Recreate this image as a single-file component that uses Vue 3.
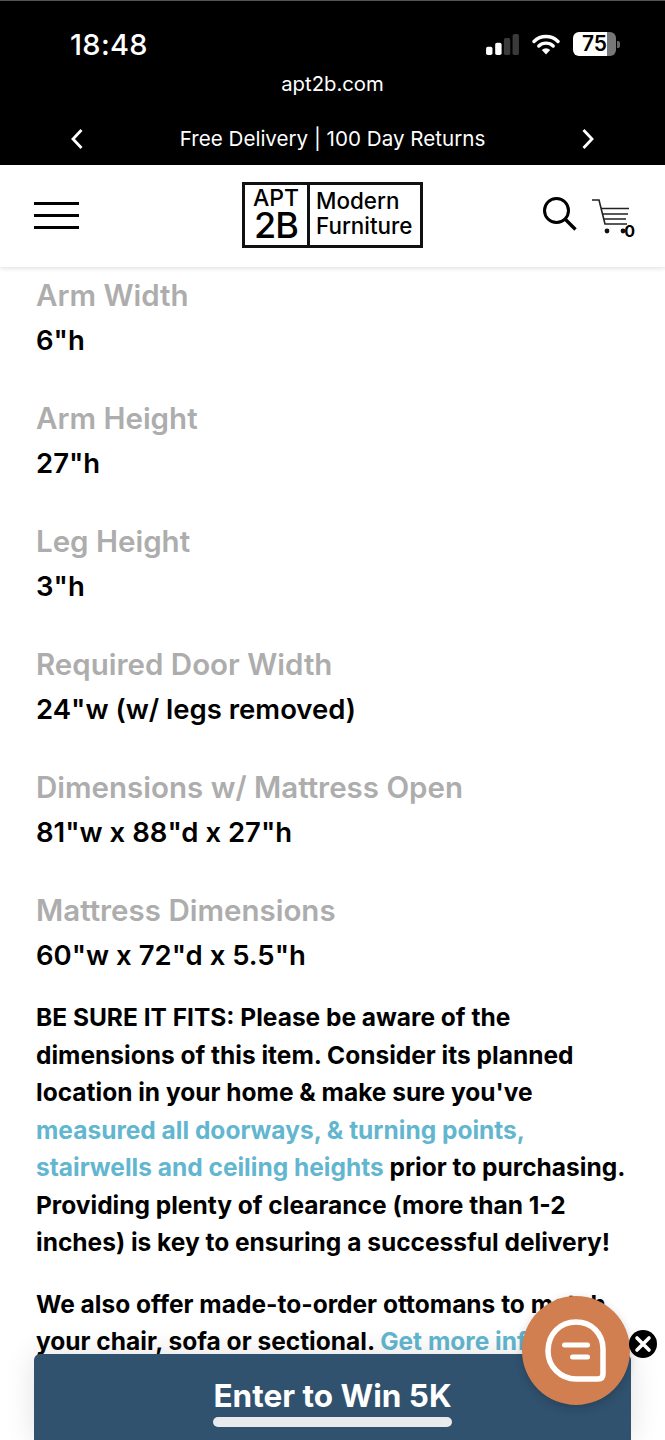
<template>
  <div class="page">
    <div class="top_black">
      <div class="status_bar">
        <span class="time">18:48</span>
        <div class="status_icons">
          <svg class="signal" width="33" height="21" viewBox="0 0 36 23">
            <rect x="0" y="14" width="7" height="9" rx="2" fill="#fff" />
            <rect x="10" y="9.5" width="7" height="13.5" rx="2" fill="#fff" />
            <rect x="19.5" y="4.5" width="7" height="18.5" rx="2" fill="#3a3a3a" />
            <rect x="29" y="0" width="7" height="23" rx="2" fill="#3a3a3a" />
          </svg>
          <svg class="wifi" width="28" height="21" viewBox="0 0 28 21">
            <path d="M2 7.5 A17 17 0 0 1 26 7.5" fill="none" stroke="#fff" stroke-width="3.4" stroke-linecap="round" />
            <path d="M6.8 12 A10.5 10.5 0 0 1 21.2 12" fill="none" stroke="#fff" stroke-width="3.4" stroke-linecap="round" />
            <path d="M14 20.5 L9.8 16 A6 6 0 0 1 18.2 16 Z" fill="#fff" />
          </svg>
          <div class="battery">
            <div class="battery_body"><span>75</span></div>
            <div class="battery_tip"></div>
          </div>
        </div>
      </div>
      <div class="url">apt2b.com</div>
      <div class="promo">
        <svg width="14" height="22" viewBox="0 0 14 22"><path d="M11.5 2 L3 11 L11.5 20" fill="none" stroke="#fff" stroke-width="2.8" /></svg>
        <span>Free Delivery | 100 Day Returns</span>
        <svg width="14" height="22" viewBox="0 0 14 22"><path d="M2.5 2 L11 11 L2.5 20" fill="none" stroke="#fff" stroke-width="2.8" /></svg>
      </div>
    </div>

    <div class="nav">
      <div class="burger"><i></i><i></i><i></i></div>
      <div class="logo">
        <div class="logo_left">
          <span class="apt">APT</span>
          <span class="two_b">2B</span>
        </div>
        <div class="logo_right">
          <span>Modern</span>
          <span>Furniture</span>
        </div>
      </div>
      <div class="nav_icons">
        <svg width="36" height="36" viewBox="0 0 36 36">
          <circle cx="14.5" cy="14.5" r="12" fill="none" stroke="#000" stroke-width="3" />
          <path d="M23 23 L33.5 33.5" stroke="#000" stroke-width="3.4" />
        </svg>
        <div class="cart">
          <svg width="38" height="36" viewBox="0 0 38 36">
            <path d="M0 1 H7 L13 25 H35" fill="none" stroke="#222" stroke-width="1.6" />
            <path d="M9 9.5 H37 M10.5 15 H36 M12 20 H34" fill="none" stroke="#222" stroke-width="1.6" />
            <circle cx="15" cy="32" r="2.4" fill="#111" />
            <circle cx="31" cy="32" r="2.4" fill="#111" />
          </svg>
          <span class="cart_count">0</span>
        </div>
      </div>
    </div>

    <div class="content">
      <div v-for="spec in specs" :key="spec.label" class="spec">
        <div class="spec_label">{{ spec.label }}</div>
        <div class="spec_value">{{ spec.value }}</div>
      </div>

      <p class="note first_note">
        BE SURE IT FITS: Please be aware of the<br />
        dimensions of this item. Consider its planned<br />
        location in your home &amp; make sure you've<br />
        <span class="link">measured all doorways, &amp; turning points,<br />
        stairwells and ceiling heights</span> prior to purchasing.<br />
        Providing plenty of clearance (more than 1-2<br />
        inches) is key to ensuring a successful delivery!
      </p>
      <p class="note">
        We also offer made-to-order ottomans to match<br />
        your chair, sofa or sectional. <span class="link">Get more info</span>
      </p>
    </div>

    <div class="win_banner">
      <div class="win_label">
        <span>Enter to Win 5K</span>
        <div class="win_underline"></div>
      </div>
    </div>

    <div class="chat_bubble">
      <svg width="66" height="66" viewBox="0 0 66 66">
        <path d="M33 4 C48.5 4 60 15.5 60 31 V56 Q60 61 55 61 H33 C17.5 61 5 48.5 5 33 C5 16 17 4 33 4 Z" fill="none" stroke="#fff" stroke-width="5.5" />
        <path d="M21.5 27 H44.5" stroke="#fff" stroke-width="5" stroke-linecap="round" />
        <path d="M29.5 39 H44.5" stroke="#fff" stroke-width="5" stroke-linecap="round" />
      </svg>
    </div>
    <div class="chat_close">
      <svg width="18" height="18" viewBox="0 0 18 18">
        <path d="M3 3 L15 15 M15 3 L3 15" stroke="#fff" stroke-width="3.6" stroke-linecap="round" />
      </svg>
    </div>
  </div>
</template>

<script setup>
const specs = [
  { label: "Arm Width", value: '6"h' },
  { label: "Arm Height", value: '27"h' },
  { label: "Leg Height", value: '3"h' },
  { label: "Required Door Width", value: '24"w (w/ legs removed)' },
  { label: "Dimensions w/ Mattress Open", value: '81"w x 88"d x 27"h' },
  { label: "Mattress Dimensions", value: '60"w x 72"d x 5.5"h' },
];
</script>

<style scoped>
.page {
  position: relative;
  width: 665px;
  height: 1440px;
  overflow: hidden;
  background-color: #fff;
  font-family: Inter, "Liberation Sans", sans-serif;
  color: #000;
}

.top_black {
  height: 165px;
  box-sizing: border-box;
  background-color: #000;
  color: #fff;
  border-top: 1px solid #555;
  padding-top: 12px;
}
.status_bar {
  display: flex;
  justify-content: space-between;
  align-items: center;
  height: 62px;
  padding: 0 45px 0 70px;
}
.time {
  font-size: 29px;
  font-weight: 500;
  letter-spacing: 0.3px;
}
.status_icons {
  display: flex;
  align-items: center;
  gap: 13px;
}
.battery {
  display: flex;
  align-items: center;
  gap: 1px;
}
.battery_body {
  width: 43px;
  height: 24px;
  border-radius: 6px;
  background: linear-gradient(to right, #fff 79%, #777 79%);
  color: #000;
  font-size: 21px;
  font-weight: 600;
  line-height: 24px;
  text-align: center;
}
.battery_tip {
  width: 3px;
  height: 7px;
  border-radius: 0 2px 2px 0;
  background-color: #666;
}
.url {
  margin-top: -3px;
  text-align: center;
  font-size: 20.3px;
  line-height: 24px;
}
.promo {
  display: flex;
  justify-content: space-between;
  align-items: center;
  margin-top: 29px;
  padding: 0 70px;
  font-size: 20.6px;
  line-height: 28px;
}

.nav {
  position: relative;
  z-index: 1;
  display: grid;
  grid-template-columns: 1fr auto 1fr;
  align-items: center;
  height: 102px;
  box-sizing: border-box;
  padding: 0 34px 2px;
  background-color: #fff;
  box-shadow: 0 1px 5px rgba(0, 0, 0, 0.14);
}
.burger {
  display: flex;
  flex-direction: column;
  gap: 9px;
  width: 45px;
}
.burger i {
  display: block;
  height: 3px;
  background-color: #000;
}
.logo {
  display: flex;
  height: 66px;
  box-sizing: border-box;
  border: 3px solid #111;
}
.logo_left {
  display: flex;
  flex-direction: column;
  align-items: center;
  width: 65px;
  box-sizing: border-box;
  border-right: 3px solid #111;
  padding-top: 1px;
}
.apt {
  font-size: 23px;
  font-weight: 500;
  line-height: 24px;
}
.two_b {
  font-size: 36px;
  font-weight: 500;
  line-height: 31px;
  letter-spacing: -1px;
}
.logo_right {
  display: flex;
  flex-direction: column;
  width: 110px;
  padding: 3px 0 0 6px;
  box-sizing: border-box;
  font-size: 22.4px;
  font-weight: 500;
  line-height: 25px;
}
.nav_icons {
  display: flex;
  align-items: flex-start;
  justify-content: flex-end;
  gap: 14px;
  margin-right: -3px;
}
.cart {
  position: relative;
  width: 42px;
  height: 36px;
  margin-top: 3px;
}
.cart_count {
  position: absolute;
  right: -1px;
  bottom: -6px;
  font-size: 16px;
  font-weight: 700;
}

.content {
  padding: 8px 36px 0;
}
.spec {
  margin-bottom: 33px;
}
.spec_label {
  font-size: 29.5px;
  font-weight: 600;
  line-height: 40px;
  color: #adadad;
}
.spec_value {
  font-size: 27.5px;
  font-weight: 600;
  line-height: 50px;
}
.note {
  margin: 0;
  font-size: 24.5px;
  font-weight: 700;
  line-height: 37.5px;
}
.first_note {
  margin: -14px 0 24px;
}
.link {
  color: #62b6cf;
}

.win_banner {
  position: absolute;
  left: 34px;
  bottom: 0;
  width: 597px;
  height: 86px;
  background-color: #30526f;
  border-radius: 6px 6px 0 0;
  display: flex;
  justify-content: center;
  box-shadow: 0 0 30px rgba(0, 0, 0, 0.12);
}
.win_label {
  margin-top: 24px;
  color: #fff;
  font-size: 31.5px;
  font-weight: 700;
  line-height: 36px;
}
.win_underline {
  height: 10px;
  margin-top: 3px;
  border-radius: 5px;
  background-color: #e9eaeb;
}

.chat_bubble {
  position: absolute;
  left: 522px;
  top: 1296px;
  width: 108px;
  height: 109px;
  border-radius: 50%;
  background-color: #d17f50;
  display: flex;
  align-items: center;
  justify-content: center;
  box-shadow: 0 3px 10px rgba(0, 0, 0, 0.2);
}
.chat_close {
  position: absolute;
  left: 629px;
  top: 1330px;
  width: 28px;
  height: 28px;
  border-radius: 50%;
  background-color: #000;
  display: flex;
  align-items: center;
  justify-content: center;
}
</style>
